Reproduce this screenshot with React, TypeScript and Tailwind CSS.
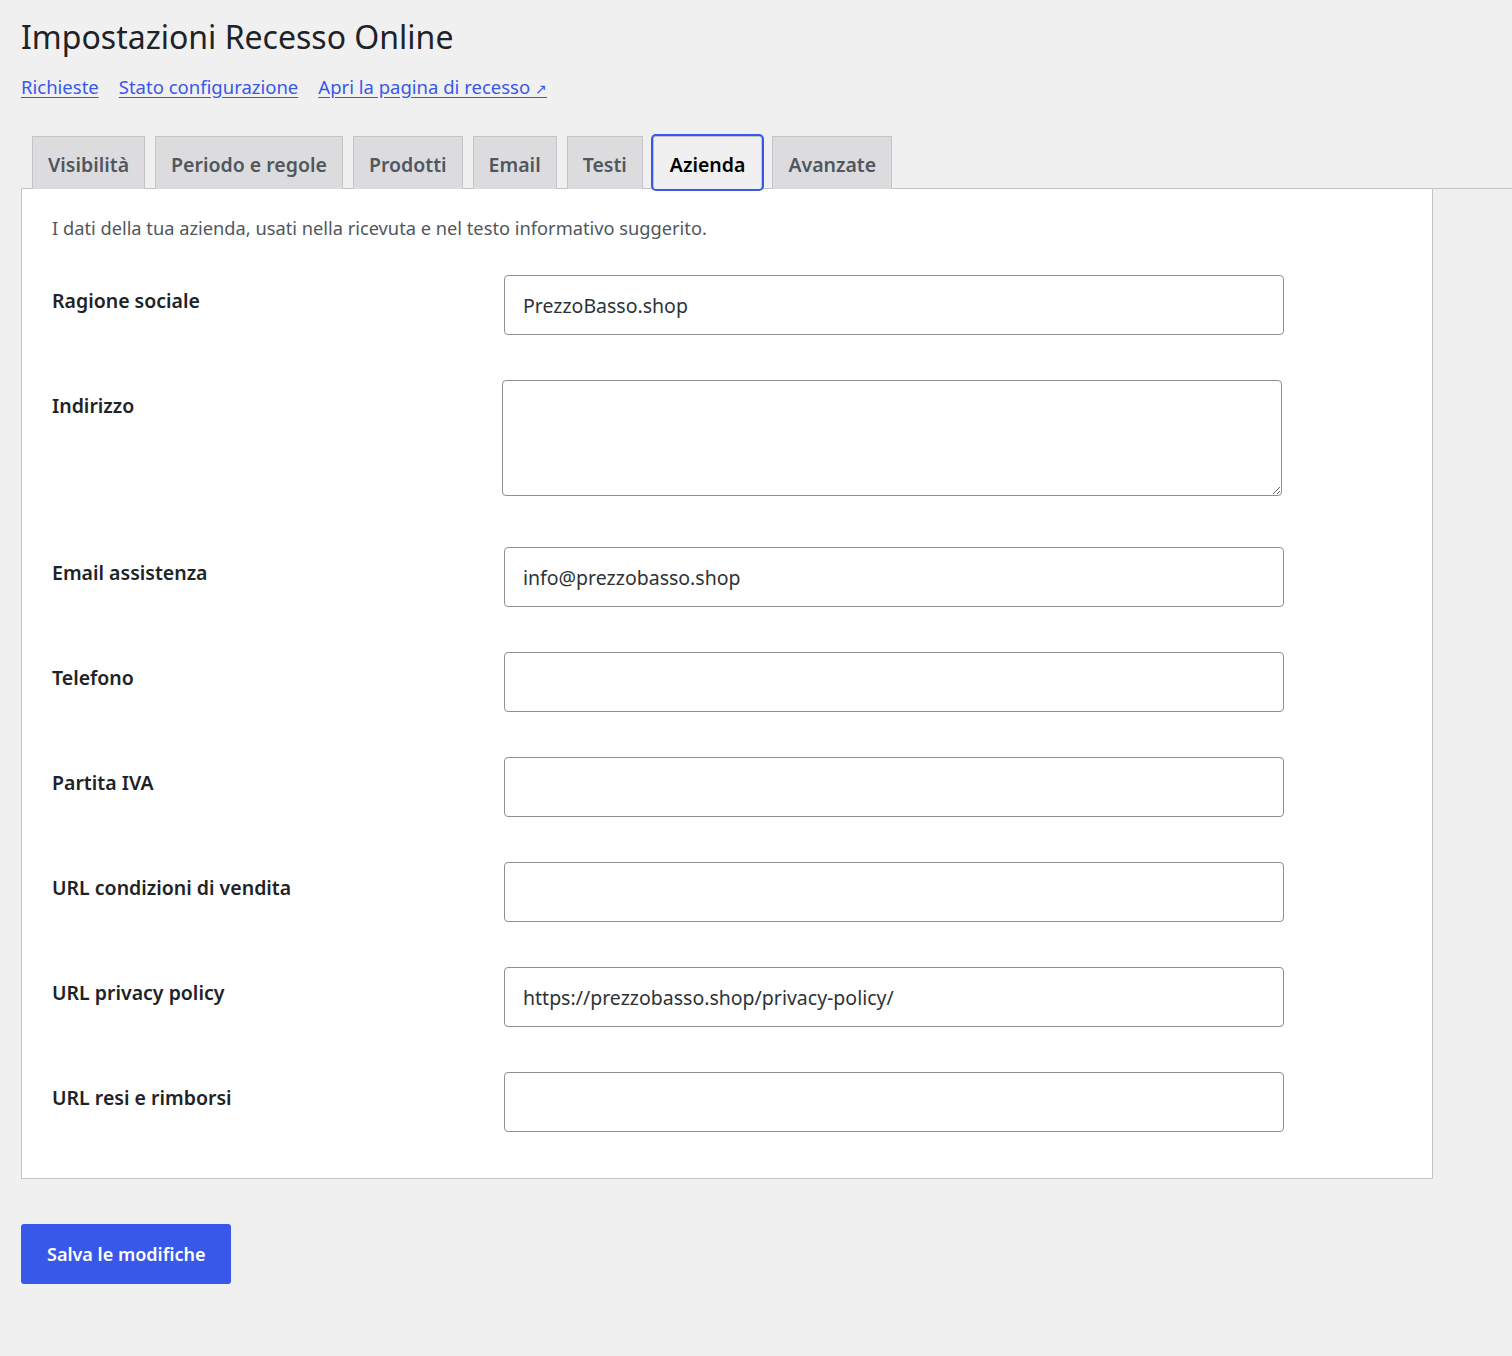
import React from 'react'

const font = { fontFamily: '"Noto Sans", "Open Sans", Arial, sans-serif' }

const tabs = ['Visibilità', 'Periodo e regole', 'Prodotti', 'Email', 'Testi', 'Azienda', 'Avanzate']

const fields: { label: string; value?: string; area?: boolean }[] = [
  { label: 'Ragione sociale', value: 'PrezzoBasso.shop' },
  { label: 'Indirizzo', area: true },
  { label: 'Email assistenza', value: 'info@prezzobasso.shop' },
  { label: 'Telefono' },
  { label: 'Partita IVA' },
  { label: 'URL condizioni di vendita' },
  { label: 'URL privacy policy', value: 'https://prezzobasso.shop/privacy-policy/' },
  { label: 'URL resi e rimborsi' },
]

const Row = ({ label, value, area }: { label: string; value?: string; area?: boolean }) => (
  <div className={`grid grid-cols-[452px_780px] ${area ? 'mb-[51px]' : 'mb-[45px]'} last:mb-0`}>
    <label className="pt-[13px] text-[19.5px] font-semibold leading-[26px] text-[#1d2327]">{label}</label>
    {area ? (
      <textarea
        className="-ml-[2px] h-[116px] w-[780px] resize-y rounded-[4px] border border-[#8c8f94] bg-white px-[18px] py-2 text-[19.5px] text-[#2c3338] outline-none"
        defaultValue=""
      />
    ) : (
      <input
        className="h-[60px] w-[780px] rounded-[4px] border border-[#8c8f94] bg-white px-[18px] text-[19.5px] text-[#2c3338] outline-none"
        defaultValue={value ?? ''}
      />
    )}
  </div>
)

export default function App() {
  return (
    <div className="min-h-[1356px] bg-[#f0f0f1] pl-[21px] pt-[16px]" style={font}>
      <h1 className="text-[32px] font-normal leading-[42px] text-[#1d2327]">Impostazioni Recesso Online</h1>

      <div className="mt-[16px] flex gap-[20px] text-[18.5px] leading-[26px] text-[#3858e9]">
        <a href="#" className="underline underline-offset-[3px]">Richieste</a>
        <a href="#" className="underline underline-offset-[3px]">Stato configurazione</a>
        <a href="#" className="underline underline-offset-[3px]">Apri la pagina di recesso <span className="text-[14px]">↗</span></a>
      </div>

      <div className="mt-[34px] flex h-[53px] items-end gap-[10px] border-b border-[#c3c4c7] pl-[11px]">
        {tabs.map((t) =>
          t === 'Azienda' ? (
            <div
              key={t}
              className="-mb-px flex h-[53px] items-center rounded-[3px] border border-[#c3c4c7] border-b-[#f0f0f1] bg-[#f0f0f1] px-[16px] pt-[4px] text-[19.5px] font-semibold text-black ring-2 ring-[#3858e9]"
            >
              {t}
            </div>
          ) : (
            <div
              key={t}
              className="-mb-px flex h-[53px] items-center border border-[#c3c4c7] border-b-0 bg-[#dcdcde] px-[15px] pt-[4px] text-[19.5px] font-semibold text-[#50575e]"
            >
              {t}
            </div>
          )
        )}
      </div>

      <div className="w-[1412px] border border-t-0 border-[#c3c4c7] bg-white pb-[46px] pl-[30px] pt-[26px]">
        <p className="text-[18.25px] leading-[26px] text-[#50575e]">
          I dati della tua azienda, usati nella ricevuta e nel testo informativo suggerito.
        </p>
        <div className="mt-[34px]">
          {fields.map((f) => (
            <Row key={f.label} {...f} />
          ))}
        </div>
      </div>

      <button className="mt-[45px] h-[60px] rounded-[3px] bg-[#3858e9] px-[26px] text-[18px] font-semibold text-white">
        Salva le modifiche
      </button>
    </div>
  )
}
